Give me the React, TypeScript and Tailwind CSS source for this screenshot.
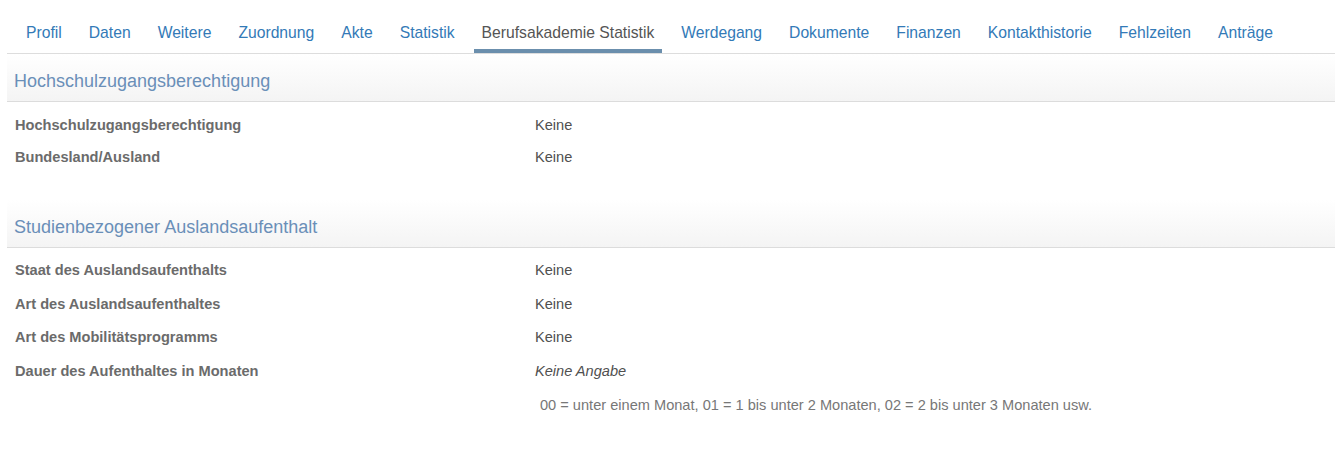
import React from "react";

const tabs = [
  "Profil",
  "Daten",
  "Weitere",
  "Zuordnung",
  "Akte",
  "Statistik",
  "Berufsakademie Statistik",
  "Werdegang",
  "Dokumente",
  "Finanzen",
  "Kontakthistorie",
  "Fehlzeiten",
  "Anträge",
];

const ACTIVE = "Berufsakademie Statistik";

function SectionHeader({ title }: { title: string }) {
  return (
    <div className="h-[48px] pt-[16px] px-[7px] border-b border-[#dcdcdc] bg-gradient-to-b from-white to-[#f4f4f4]">
      <h3 className="text-[18px] leading-[22px] text-[#6a8fb8] font-normal">{title}</h3>
    </div>
  );
}

function Row({ label, value, italic, h }: { label: string; value: string; italic?: boolean; h: string }) {
  return (
    <div className={`flex items-center ${h}`}>
      <div className="w-[528px] pl-[8px] font-bold text-[14.6px] text-[#6b6b6b]">{label}</div>
      <div className={`text-[14.6px] text-[#505050] ${italic ? "italic" : ""}`}>{value}</div>
    </div>
  );
}

export default function App() {
  return (
    <div
      className="bg-white w-[1335px] h-[450px] pl-[7px]"
      style={{ fontFamily: '"Liberation Sans", Arial, sans-serif' }}
    >
      {/* tab bar */}
      <ul className="flex border-b border-[#dddddd] pl-[11px]">
        {tabs.map((t) => (
          <li key={t} className="mr-[11px]">
            <a
              className={`block px-[8px] pt-[23px] pb-[6px] text-[15.7px] leading-[20px] border-b-[4px] ${
                t === ACTIVE
                  ? "border-[#6b8fad] text-[#555]"
                  : "border-transparent text-[#337ab7]"
              }`}
            >
              {t}
            </a>
          </li>
        ))}
      </ul>

      <SectionHeader title="Hochschulzugangsberechtigung" />
      <div className="pt-[8px]">
        <Row h="h-[32px]" label="Hochschulzugangsberechtigung" value="Keine" />
        <Row h="h-[32px]" label="Bundesland/Ausland" value="Keine" />
      </div>

      <div className="mt-[26px]">
        <SectionHeader title="Studienbezogener Auslandsaufenthalt" />
        <div className="pt-[6px]">
          <Row h="h-[33.75px]" label="Staat des Auslandsaufenthalts" value="Keine" />
          <Row h="h-[33.75px]" label="Art des Auslandsaufenthaltes" value="Keine" />
          <Row h="h-[33.75px]" label="Art des Mobilitätsprogramms" value="Keine" />
          <Row h="h-[33.75px]" label="Dauer des Aufenthaltes in Monaten" value="Keine Angabe" italic />
          <div className="flex h-[33.75px] items-center">
            <div className="w-[528px]" />
            <div className="text-[14.6px] text-[#777] pl-[5px]">
              00 = unter einem Monat, 01 = 1 bis unter 2 Monaten, 02 = 2 bis unter 3 Monaten usw.
            </div>
          </div>
        </div>
      </div>
    </div>
  );
}
